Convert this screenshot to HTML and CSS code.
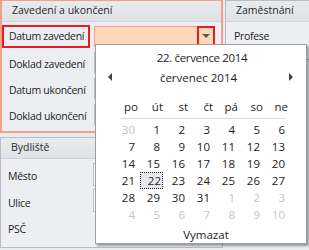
FILE: index.html
```html
<!DOCTYPE html>
<html lang="cs">
<head>
    <meta charset="UTF-8">
    <title>Zavedení a ukončení</title>
    <link rel="stylesheet" href="styles.css">
</head>
<body>

<div class="layout">
    <div class="left-col">
        <!-- Zavedení a ukončení -->
        <div class="group group-active">
            <div class="group-header">Zavedení a ukončení</div>
            <div class="group-body">
                <div class="row">
                    <label class="label label-marked">Datum zavedení</label>
                    <div class="input input-focused">
                        <span class="drop-btn"><span class="drop-arrow"></span></span>
                    </div>
                </div>
                <div class="row">
                    <label class="label">Doklad zavedení</label>
                    <div class="input"></div>
                </div>
                <div class="row">
                    <label class="label">Datum ukončení</label>
                    <div class="input"></div>
                </div>
                <div class="row">
                    <label class="label">Doklad ukončení</label>
                    <div class="input"></div>
                </div>
            </div>
        </div>

        <!-- Bydliště -->
        <div class="group group-address">
            <div class="group-header">Bydliště</div>
            <div class="group-body">
                <div class="row row-tall">
                    <label class="label">Město</label>
                    <div class="input input-small"></div>
                </div>
                <div class="row row-tall">
                    <label class="label">Ulice</label>
                    <div class="input input-small"></div>
                </div>
                <div class="row row-tall">
                    <label class="label">PSČ</label>
                </div>
            </div>
        </div>
    </div>

    <!-- Zaměstnání -->
    <div class="group group-job">
        <div class="group-header">Zaměstnání</div>
        <div class="job-body">
            <label class="label label-job">Profese</label>
        </div>
    </div>
</div>

<!-- Calendar popup -->
<div class="calendar">
    <div class="cal-today">22. července 2014</div>
    <div class="cal-nav">
        <span class="nav-arrow nav-prev"></span>
        <span class="cal-month">červenec 2014</span>
        <span class="nav-arrow nav-next"></span>
    </div>
    <div class="cal-heads">
        <div class="cal-head">po</div>
        <div class="cal-head">út</div>
        <div class="cal-head">st</div>
        <div class="cal-head">čt</div>
        <div class="cal-head">pá</div>
        <div class="cal-head">so</div>
        <div class="cal-head">ne</div>
    </div>
    <div class="cal-grid" id="calGrid"></div>
    <div class="cal-clear">Vymazat</div>
</div>

<script>
    // Fill the month grid (July 2014 starts on Tuesday)
    const grid = document.getElementById('calGrid');
    const days = [30];
    for (let d = 1; d <= 31; d++) days.push(d);
    for (let d = 1; d <= 10; d++) days.push(d);

    days.forEach((day, i) => {
        const cell = document.createElement('div');
        cell.className = 'cal-day';
        const outside = i === 0 || i > 31;
        if (outside) cell.classList.add('cal-other');
        if (!outside && day === 22) cell.classList.add('cal-selected');
        cell.textContent = day;
        grid.appendChild(cell);
    });
</script>

</body>
</html>
```

FILE: styles.css
```css
body {
    font-family: "Open Sans", "Noto Sans", sans-serif;
    font-size: 10.5px;
    color: #1e1e1e;
    background-color: #e9ebee;
    margin: 0;
    padding: 0;
    width: 309px;
    height: 250px;
    overflow: hidden;
    position: relative;
}
.layout {
    display: flex;
    align-items: flex-start;
    gap: 2px;
}
.left-col {
    width: 223px;
    flex-shrink: 0;
    display: flex;
    flex-direction: column;
    gap: 4px;
}
.group {
    background-color: #eceef1;
    border: 1px solid #b9bdc4;
    box-sizing: border-box;
}
.group-active {
    border: 2px solid #f0a284;
    border-top-width: 1px;
    height: 133px;
}
.group-header {
    height: 21px;
    box-sizing: border-box;
    line-height: 19px;
    padding-left: 10px;
    background: linear-gradient(#e8eaee, #dfe2e6);
    border-bottom: 1px solid #d0d3d8;
    color: #2a2a2a;
    white-space: nowrap;
    overflow: hidden;
}
.group-body {
    padding-top: 1px;
}
.row {
    height: 26px;
    display: flex;
    align-items: center;
}
.row-tall {
    height: 26.5px;
}
.label {
    width: 88px;
    height: 20px;
    line-height: 20px;
    padding-left: 5px;
    box-sizing: border-box;
    border: 2px solid transparent;
    margin-right: 4px;
    flex-shrink: 0;
    white-space: nowrap;
    letter-spacing: -0.3px;
}
.label-marked {
    border-color: #e81c24;
    height: 23px;
    line-height: 19px;
}
.job-body {
    padding-top: 2px;
}
.label-job {
    display: block;
    width: auto;
    padding-left: 6px;
}
.input {
    flex: 1;
    height: 21px;
    box-sizing: border-box;
    margin-right: 6px;
    background: #fff;
    border: 1px solid #b9bdc4;
    display: flex;
    justify-content: flex-end;
}
.input-focused {
    background: #fdd9b9;
    border-color: #f0a284;
}
.input-small {
    height: 23px;
}
.drop-btn {
    width: 14px;
    height: 17px;
    border: 2px solid #e81c24;
    margin: -1px -1px 0 0;
    display: flex;
    align-items: center;
    justify-content: center;
}
.drop-arrow {
    width: 0;
    height: 0;
    border-left: 4px solid transparent;
    border-right: 4px solid transparent;
    border-top: 4px solid #555;
}
.group-address {
    height: 111px;
}
.group-address .row:first-child {
    margin-top: 1px;
}
.group-job {
    flex: 1;
    height: 60px;
    border-right: none;
}

/* Calendar popup */
.calendar {
    position: absolute;
    left: 95px;
    top: 44px;
    width: 210px;
    height: 198px;
    background: #fff;
    border: 1px solid #9c9ea2;
    box-shadow: 2px 2px 2px rgba(0,0,0,0.35);
    font-size: 11.5px;
}
.cal-today {
    text-align: center;
    margin-top: 4px;
    height: 18px;
    line-height: 18px;
    padding-left: 2px;
    letter-spacing: -0.35px;
}
.cal-nav {
    display: flex;
    align-items: center;
    justify-content: space-between;
    height: 20px;
    padding: 0 13px 0 12px;
}
.cal-month {
    margin-right: 4px;
}
.nav-arrow {
    width: 0;
    height: 0;
    border-top: 4px solid transparent;
    border-bottom: 4px solid transparent;
}
.nav-prev {
    border-right: 4px solid #444;
}
.nav-next {
    border-left: 4px solid #444;
}
.cal-heads {
    display: grid;
    grid-template-columns: 18px repeat(6, 25px);
    margin: 9px 0 0 24px;
    width: 166px;
    border-bottom: 1px solid #dcdcdc;
    height: 22px;
    line-height: 22px;
}
.cal-head {
    text-align: right;
    padding-right: 0;
}
.cal-grid {
    display: grid;
    grid-template-columns: repeat(7, 25px);
    grid-auto-rows: 17px;
    margin: 2px 0 0 17px;
}
.cal-day {
    text-align: right;
    padding-right: 3px;
    line-height: 17px;
    color: #222;
}
.cal-other {
    color: #c4c4c4;
}
.cal-selected {
    background: #e8e9ec;
    outline: 1px dotted #222;
    outline-offset: -1px;
    margin-left: 2px;
    padding-right: 2px;
}
.cal-clear {
    text-align: center;
    margin-top: 4px;
    padding-left: 10px;
}
```
